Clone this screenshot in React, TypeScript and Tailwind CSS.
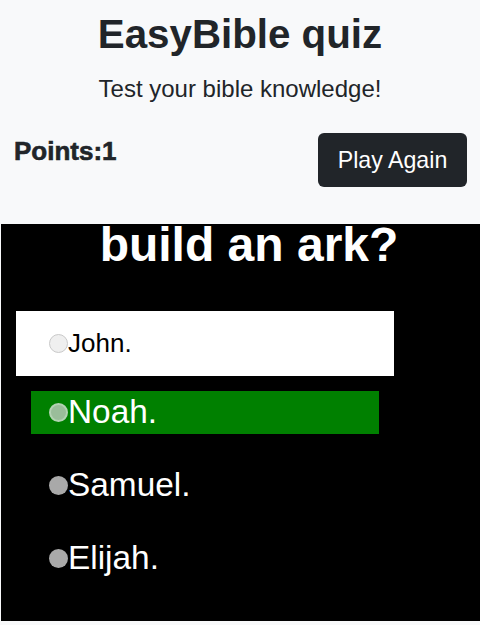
const font = "font-['Liberation_Sans',Arial,sans-serif]";

type Choice = {
  label: string;
  box: string;
  dot: string;
  text: string;
};

const choices: Choice[] = [
  {
    label: "John.",
    box: "ml-[15px] w-[378px] h-[65px] bg-white pl-[33px]",
    dot: "bg-[#efefef] border border-[#c9c9c9]",
    text: "text-black text-[26px]",
  },
  {
    label: "Noah.",
    box: "mt-[15px] ml-[30px] w-[348px] h-[43px] bg-[#008000] pl-[18px]",
    dot: "bg-[#9abd9a] border-2 border-[#b3d2b3]",
    text: "text-white text-[33.4px]",
  },
  {
    label: "Samuel.",
    box: "mt-[30px] ml-[30px] w-[348px] h-[43px] pl-[18px]",
    dot: "bg-[#a9a9a9]",
    text: "text-white text-[33.4px]",
  },
  {
    label: "Elijah.",
    box: "mt-[30px] ml-[30px] w-[348px] h-[43px] pl-[18px]",
    dot: "bg-[#a9a9a9]",
    text: "text-white text-[33.4px]",
  },
];

export default function App() {
  return (
    <div className={`${font} bg-[#f8f9fa] w-[480px] h-[625px] overflow-hidden`}>
      {/* header */}
      <header className="h-[224px] pt-[11px]">
        <h1 className="text-center text-[40.3px] leading-[1.2] font-bold text-[#212529]">
          EasyBible quiz
        </h1>
        <p className="mt-[16px] text-center text-[24px] leading-[1.2] text-[#212529]">
          Test your bible knowledge!
        </p>
        <div className="mt-[29px] flex items-start justify-between pl-[14px] pr-[13px]">
          <h5 className="mt-[3px] text-[26px] leading-[1.2] font-bold text-[#212529] [-webkit-text-stroke:0.6px_#212529]">
            Points:1
          </h5>
          <button className="h-[54px] w-[149px] rounded-[6px] bg-[#212529] text-white text-[23.2px] leading-none">
            Play Again
          </button>
        </div>
      </header>

      {/* question */}
      <section className="ml-[1px] bg-black pt-[1px] pb-[41px]">
        <h2 className="pl-[17px] text-center text-white text-[48px] leading-[40px] font-bold">
          build an ark?
        </h2>
        <div className="mt-[46px] flex flex-col">
          {choices.map((c) => (
            <label key={c.label} className={`${c.box} flex items-center`}>
              <span className={`${c.dot} w-[19px] h-[19px] rounded-full shrink-0`} />
              <span className={`${c.text} leading-[1.15]`}>{c.label}</span>
            </label>
          ))}
        </div>
      </section>
    </div>
  );
}
